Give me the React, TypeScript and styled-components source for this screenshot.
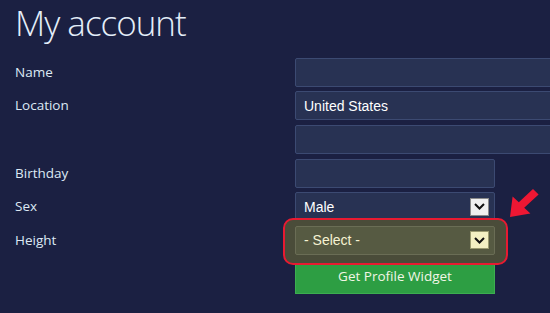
import styled, {createGlobalStyle} from 'styled-components'

const GlobalStyle = createGlobalStyle`
  html, body {
    margin: 0;
    padding: 0;
    background: #1b2042;
    overflow: hidden;
  }
`

const Chevron = () => (
  <svg width="11" height="7" viewBox="0 0 11 7">
    <path d="M1 1l4.5 4.5L10 1" fill="none" stroke="#111" strokeWidth="2" />
  </svg>
)

const RedArrow = () => (
  <svg width="31" height="30" viewBox="0 0 31 30">
    <path d="M1 28L3.6 7.6L9.8 13.3L24 0L29.6 5.4L15.2 18.7L21.4 24.4Z" fill="#ee1733" />
  </svg>
)

const App = () => (
  <Page>
    <GlobalStyle />
    <Title>My account</Title>
    <Form>
      <Label>Name</Label>
      <Input $wide />
      <Label>Location</Label>
      <Input $wide>United States</Input>
      <span />
      <Input $wide />
      <Label>Birthday</Label>
      <Input />
      <Label>Sex</Label>
      <Select>
        Male
        <ArrowBox>
          <Chevron />
        </ArrowBox>
      </Select>
      <Label>Height</Label>
      <Highlight>
        <Select $highlighted>
          - Select -
          <ArrowBox $highlighted>
            <Chevron />
          </ArrowBox>
        </Select>
        <Pointer>
          <RedArrow />
        </Pointer>
      </Highlight>
      <span />
      <Button>Get Profile Widget</Button>
    </Form>
  </Page>
)

const Page = styled.main`
  padding: 0 0 0 15px;
  width: 550px;
  height: 313px;
  box-sizing: border-box;
  overflow: hidden;
`

const Title = styled.h1`
  margin: 0;
  padding-top: 1px;
  font-family: 'Open Sans', sans-serif;
  font-weight: 300;
  font-size: 35px;
  letter-spacing: -1px;
  line-height: 44px;
  color: #e4eef9;
`

const Form = styled.div`
  margin-top: 12.5px;
  display: grid;
  grid-template-columns: 280px 1fr;
  grid-auto-rows: 29px;
  row-gap: 4.7px;
  align-items: center;
`

const Label = styled.div`
  font-family: 'Open Sans', sans-serif;
  font-size: 13.5px;
  color: #dde9f5;
  margin-top: -1px;
`

const Input = styled.div<{$wide?: boolean}>`
  box-sizing: border-box;
  height: 29px;
  width: ${({$wide}) => ($wide ? '260px' : '200px')};
  background: #283253;
  border: 1px solid #3c4a72;
  border-radius: 2px;
  padding: 0 8px;
  display: flex;
  align-items: center;
  font-family: 'Liberation Sans', Arial, sans-serif;
  font-size: 14px;
  color: #ffffff;
`

const Select = styled(Input)<{$highlighted?: boolean}>`
  width: 200px;
  justify-content: space-between;
  padding-right: 5px;
  position: relative;
  background: ${({$highlighted}) => ($highlighted ? '#565a42' : '#283253')};
  border-color: ${({$highlighted}) => ($highlighted ? '#6a6d55' : '#3c4a72')};
  color: ${({$highlighted}) => ($highlighted ? '#f6f3d2' : '#ffffff')};
`

const ArrowBox = styled.span<{$highlighted?: boolean}>`
  box-sizing: border-box;
  width: 19px;
  height: 18px;
  display: flex;
  align-items: center;
  justify-content: center;
  background: ${({$highlighted}) => ($highlighted ? '#f3f0c3' : '#f0f0f0')};
  border: 1px solid ${({$highlighted}) => ($highlighted ? '#9a9a70' : '#8a8a8a')};
`

const Highlight = styled.div`
  position: relative;
  width: 200px;
  height: 29px;

  &::before {
    content: '';
    position: absolute;
    inset: -8px -13px -10px -12px;
    border: 2px solid #e81a31;
    border-radius: 10px;
    background: #4a4c39;
  }
`

const Pointer = styled.span`
  position: absolute;
  left: 214px;
  top: -37px;
  line-height: 0;
`

const Button = styled.div`
  box-sizing: border-box;
  width: 200px;
  height: 34px;
  align-self: start;
  margin-top: 0.5px;
  background: #2d9e43;
  border: 1px solid #3cae50;
  display: flex;
  align-items: center;
  justify-content: center;
  font-family: 'Open Sans', sans-serif;
  font-size: 13.5px;
  color: #f2f6e6;
  padding-bottom: 2px;
`

export default App
